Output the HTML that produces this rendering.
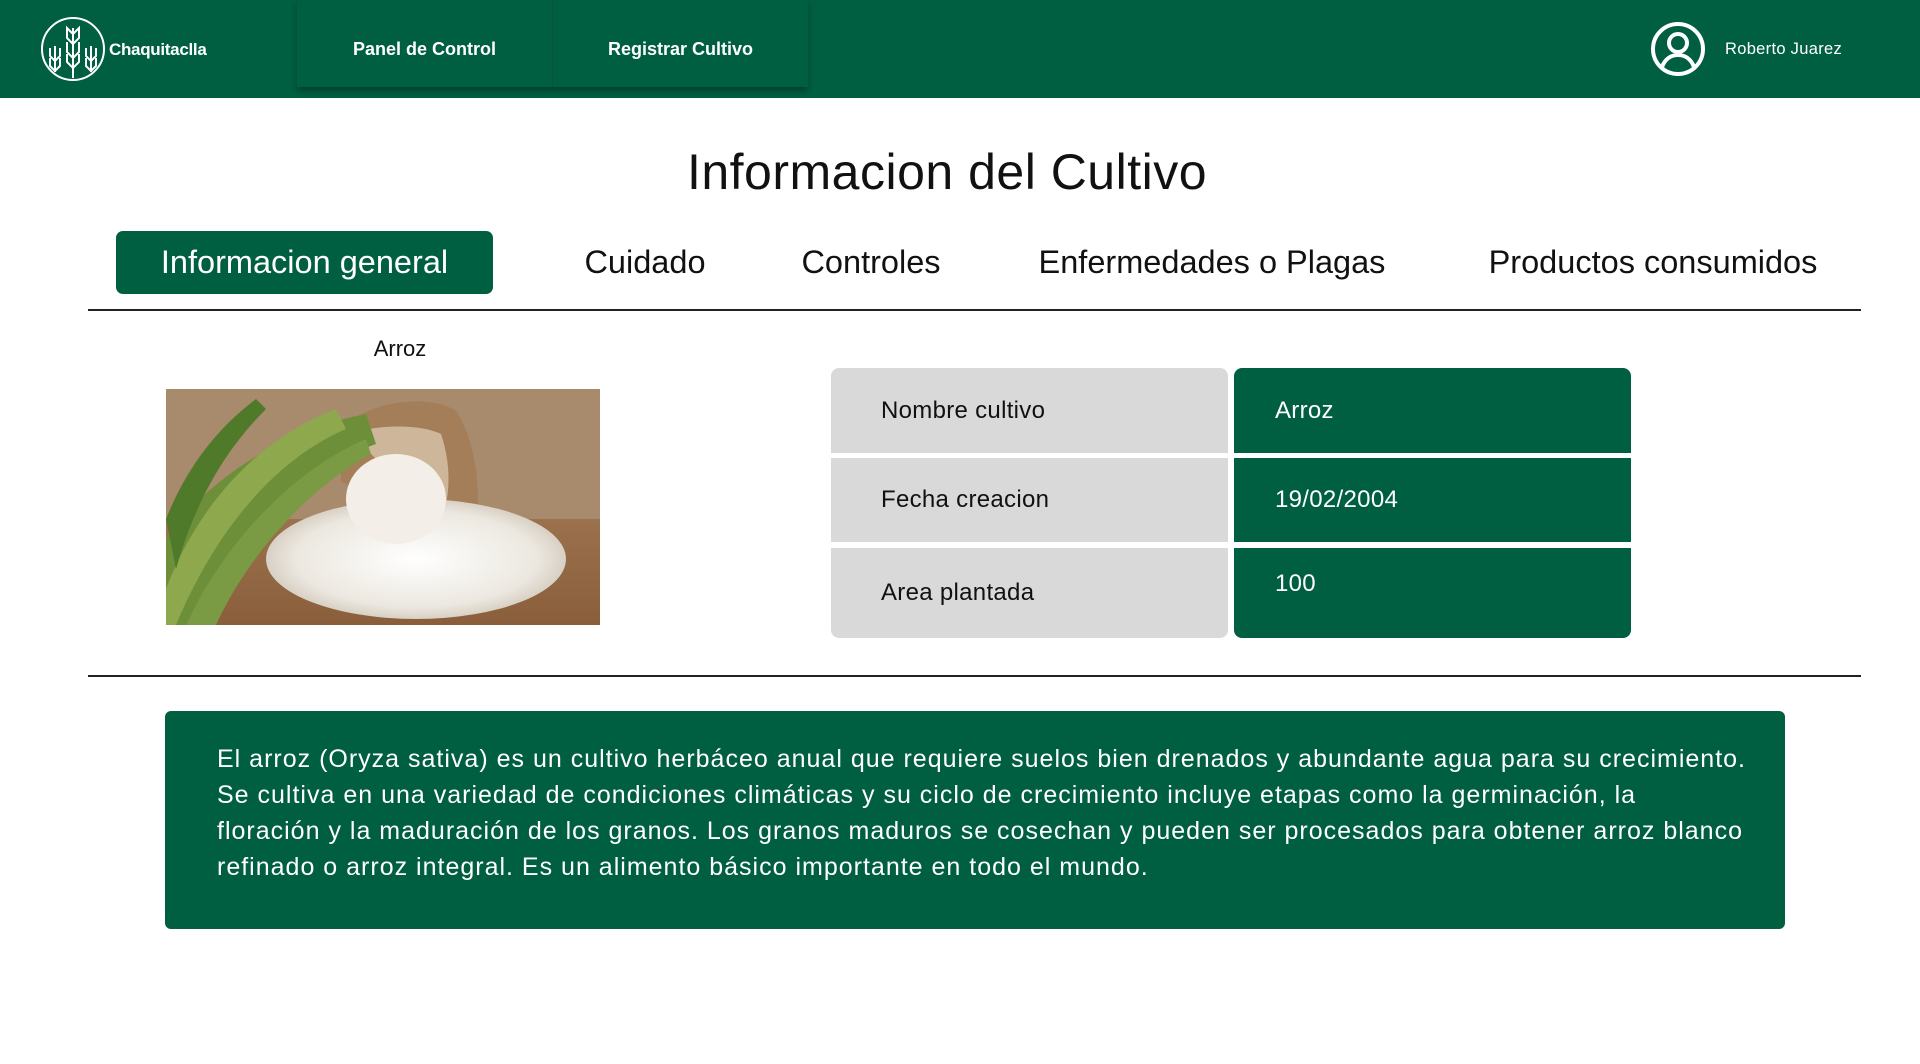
<!DOCTYPE html>
<html><head><meta charset="utf-8"><style>
*{margin:0;padding:0;box-sizing:border-box}
body{width:1920px;height:1064px;background:#fff;font-family:"Liberation Sans",sans-serif;position:relative;overflow:hidden;color:#111}
.hdr{position:absolute;left:0;top:0;width:1920px;height:98px;background:#005f40}
.nav{position:absolute;top:0;height:87px;left:297px;width:511px;background:#005f40;box-shadow:0 4px 6px rgba(0,0,0,.3);display:flex}
.nav div{flex:1;color:#fff;font-weight:bold;font-size:18px;display:flex;align-items:center;justify-content:center;padding-top:11px}
.nav div+div{border-left:1px solid #0a5538}
.abs{position:absolute}
.title{left:0;width:1894px;top:143px;text-align:center;font-size:50px;letter-spacing:.5px}
.tab{top:231px;height:63px;font-size:32.5px;display:flex;align-items:center;justify-content:center;white-space:nowrap}
.hr{height:1.5px;background:#222;left:88px;width:1773px}
.cell{position:absolute;font-size:24px;display:flex;align-items:center;letter-spacing:.3px}
.g{background:#d9d9d9;left:831px;width:397px;padding-left:50px;color:#111}
.v{background:#005f40;left:1234px;width:397px;padding-left:41px;color:#fff}
.desc{left:165px;top:711px;width:1620px;height:218px;background:#005f40;border-radius:6px;color:#fff;font-size:25px;letter-spacing:1px;line-height:36px;padding:30px 20px 0 52px;white-space:nowrap}
</style></head><body>
<div class="hdr"></div>
<svg class="abs" style="left:39px;top:16px" width="68" height="66" viewBox="0 0 68 66" fill="none" stroke="#fff" stroke-width="2">
<ellipse cx="34" cy="33" rx="31" ry="31"/>
<path d="M34 12v50M34 18l-6-6v10l6 6 6-6V12zM28 26v10l6 6 6-6V26M28 38v8l6 6 6-6v-8"/>
<path d="M16 30v26M11 32v8l5 5 5-5v-8M11 42v8l5 5 5-5v-8"/>
<path d="M52 30v26M47 32v8l5 5 5-5v-8M47 42v8l5 5 5-5v-8"/>
</svg>
<div class="abs" style="left:109px;top:40px;color:#fff;font-weight:bold;font-size:17px;letter-spacing:-.3px">Chaquitaclla</div>
<div class="nav"><div>Panel de Control</div><div>Registrar Cultivo</div></div>
<svg class="abs" style="left:1650px;top:21px" width="56" height="56" viewBox="0 0 56 56" fill="none" stroke="#fff" stroke-width="4">
<circle cx="28" cy="28" r="25"/><circle cx="28" cy="22" r="9"/><path d="M12 46c3-8 9-12 16-12s13 4 16 12"/>
</svg>
<div class="abs" style="left:1725px;top:40px;color:#fff;font-size:16.5px;letter-spacing:.3px">Roberto Juarez</div>
<div class="abs title">Informacion del Cultivo</div>
<div class="abs tab" style="left:116px;width:377px;background:#005f40;color:#fff;border-radius:7px">Informacion general</div>
<div class="abs tab" style="left:545px;width:200px">Cuidado</div>
<div class="abs tab" style="left:771px;width:200px">Controles</div>
<div class="abs tab" style="left:1012px;width:400px">Enfermedades o Plagas</div>
<div class="abs tab" style="left:1453px;width:400px">Productos consumidos</div>
<div class="abs hr" style="top:309px"></div>
<div class="abs" style="left:300px;width:200px;text-align:center;top:336px;font-size:22px">Arroz</div>
<svg class="abs" style="left:166px;top:389px" width="434" height="236" viewBox="0 0 434 236">
<defs><linearGradient id="w" x1="0" y1="0" x2="0" y2="1"><stop offset="0" stop-color="#b08a66"/><stop offset="1" stop-color="#8a5e3a"/></linearGradient>
<radialGradient id="r" cx=".5" cy=".5" r=".5"><stop offset="0" stop-color="#fff"/><stop offset=".8" stop-color="#ece8e0"/><stop offset="1" stop-color="#d8d0c4"/></radialGradient></defs>
<rect width="434" height="236" fill="url(#w)"/>
<rect width="434" height="130" fill="#a88a6c"/>
<path d="M175 40c30-30 90-35 115-18 20 30 25 80 20 110l-40 20c-20-40-60-40-95-60z" fill="#a37e58"/>
<path d="M185 45c25-10 70-10 90 0 10 30 10 60 0 90z" fill="#cdb69a"/>
<ellipse cx="250" cy="170" rx="150" ry="60" fill="url(#r)"/>
<ellipse cx="230" cy="110" rx="50" ry="45" fill="#f3efe8"/>
<path d="M0 236V150C40 90 120 40 200 25l10 30C140 80 60 150 20 236z" fill="#6e8f3a"/>
<path d="M0 200C30 120 90 50 170 20l10 20C110 70 50 140 10 236H0z" fill="#8ea84e"/>
<path d="M0 130C20 80 50 40 90 10l10 10C60 60 30 110 10 180z" fill="#4f7a2a"/>
<path d="M20 236C60 150 130 80 200 50l5 15C140 100 80 170 50 236z" fill="#7a9a44"/>
</svg>
<div class="cell g" style="top:368px;height:85px;border-radius:8px 8px 0 0">Nombre cultivo</div>
<div class="cell g" style="top:458px;height:84px">Fecha creacion</div>
<div class="cell g" style="top:548px;height:90px;border-radius:0 0 8px 8px">Area plantada</div>
<div class="cell v" style="top:368px;height:85px;border-radius:8px 8px 0 0">Arroz</div>
<div class="cell v" style="top:458px;height:84px">19/02/2004</div>
<div class="cell v" style="top:548px;height:90px;border-radius:0 0 8px 8px;align-items:flex-start;padding-top:22px">100</div>
<div class="abs hr" style="top:675px"></div>
<div class="abs desc">El arroz (Oryza sativa) es un cultivo herbáceo anual que requiere suelos bien drenados y abundante agua para su crecimiento.<br>Se cultiva en una variedad de condiciones climáticas y su ciclo de crecimiento incluye etapas como la germinación, la<br>floración y la maduración de los granos. Los granos maduros se cosechan y pueden ser procesados para obtener arroz blanco<br>refinado o arroz integral. Es un alimento básico importante en todo el mundo.</div>
</body></html>
